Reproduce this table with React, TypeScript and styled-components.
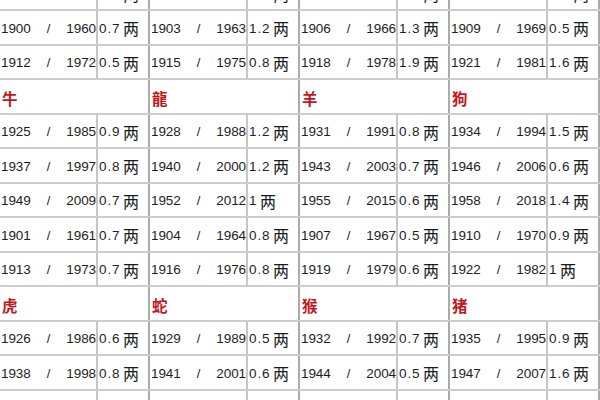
import React from "react";
import styled, { createGlobalStyle } from "styled-components";

const Global = createGlobalStyle`
  html, body {
    margin: 0;
    padding: 0;
    background: #ffffff;
    overflow: hidden;
  }
  body {
    width: 600px;
    height: 400px;
  }
`;

type Entry = { a: number; b: number; w: string };
type Row =
  | { kind: "data"; cells: Entry[] }
  | { kind: "head"; names: string[] };

const e = (a: number, w: string): Entry => ({ a, b: a + 60, w });

const rows: Row[] = [
  { kind: "data", cells: [e(1948, "1.6"), e(1951, "1.2"), e(1954, "1.5"), e(1957, "1.8")] },
  { kind: "data", cells: [e(1900, "0.7"), e(1903, "1.2"), e(1906, "1.3"), e(1909, "0.5")] },
  { kind: "data", cells: [e(1912, "0.5"), e(1915, "0.8"), e(1918, "1.9"), e(1921, "1.6")] },
  { kind: "head", names: ["牛", "龍", "羊", "狗"] },
  { kind: "data", cells: [e(1925, "0.9"), e(1928, "1.2"), e(1931, "0.8"), e(1934, "1.5")] },
  { kind: "data", cells: [e(1937, "0.8"), e(1940, "1.2"), e(1943, "0.7"), e(1946, "0.6")] },
  { kind: "data", cells: [e(1949, "0.7"), e(1952, "1"), e(1955, "0.6"), e(1958, "1.4")] },
  { kind: "data", cells: [e(1901, "0.7"), e(1904, "0.8"), e(1907, "0.5"), e(1910, "0.9")] },
  { kind: "data", cells: [e(1913, "0.7"), e(1916, "0.8"), e(1919, "0.6"), e(1922, "1")] },
  { kind: "head", names: ["虎", "蛇", "猴", "猪"] },
  { kind: "data", cells: [e(1926, "0.6"), e(1929, "0.5"), e(1932, "0.7"), e(1935, "0.9")] },
  { kind: "data", cells: [e(1938, "0.8"), e(1941, "0.6"), e(1944, "0.5"), e(1947, "1.6")] },
  { kind: "data", cells: [e(1950, "1.2"), e(1953, "0.7"), e(1956, "1.4"), e(1959, "0.8")] },
];

const Sheet = styled.div`
  display: flex;
  flex-direction: column;
  width: 600px;
  margin-top: -23.5px;
  font-family: "Liberation Sans", Arial, sans-serif;
  color: #1e1e1e;
`;

const TableRow = styled.div`
  display: grid;
  grid-template-columns: repeat(4, 150px);
  height: 34.5px;
  box-sizing: border-box;
  border-bottom: 2px solid #cccccc;
`;

const Group = styled.div`
  display: grid;
  grid-template-columns: 98px 48px;
  border-right: 2px solid #ababab;
  min-width: 0;
`;

const YearCell = styled.div`
  display: flex;
  align-items: center;
  justify-content: space-between;
  padding: 2px 0 0 1px;
  border-right: 2px solid #c6c6c6;
  font-size: 13.5px;
  letter-spacing: -0.1px;
  white-space: nowrap;
`;

const Slash = styled.span`
  font-size: 13px;
`;

const WeightCell = styled.div`
  display: flex;
  align-items: center;
  padding: 2px 0 0 1px;
  white-space: nowrap;
  overflow: hidden;
`;

const Num = styled.span`
  font-size: 13.5px;
  letter-spacing: 0.9px;
`;

const Liang = styled.span`
  font-family: "Noto Sans CJK SC", "Noto Sans CJK TC", sans-serif;
  font-size: 16px;
  line-height: 1;
  margin-left: 2.5px;
  color: #1a1a1a;
`;

const HeadCell = styled.div`
  display: flex;
  align-items: center;
  padding: 3px 0 0 2px;
  border-right: 2px solid #ababab;
  font-family: "Noto Sans CJK SC", "Noto Sans CJK TC", sans-serif;
  font-weight: 700;
  font-size: 15.5px;
  color: #c2161d;
`;

export default function App() {
  return (
    <>
      <Global />
      <Sheet>
        {rows.map((r, i) =>
          r.kind === "head" ? (
            <TableRow key={i}>
              {r.names.map((n) => (
                <HeadCell key={n}>{n}</HeadCell>
              ))}
            </TableRow>
          ) : (
            <TableRow key={i}>
              {r.cells.map((c) => (
                <Group key={c.a}>
                  <YearCell>
                    <span>{c.a}</span>
                    <Slash>/</Slash>
                    <span>{c.b}</span>
                  </YearCell>
                  <WeightCell>
                    <Num>{c.w}</Num>
                    <Liang>两</Liang>
                  </WeightCell>
                </Group>
              ))}
            </TableRow>
          )
        )}
      </Sheet>
    </>
  );
}
